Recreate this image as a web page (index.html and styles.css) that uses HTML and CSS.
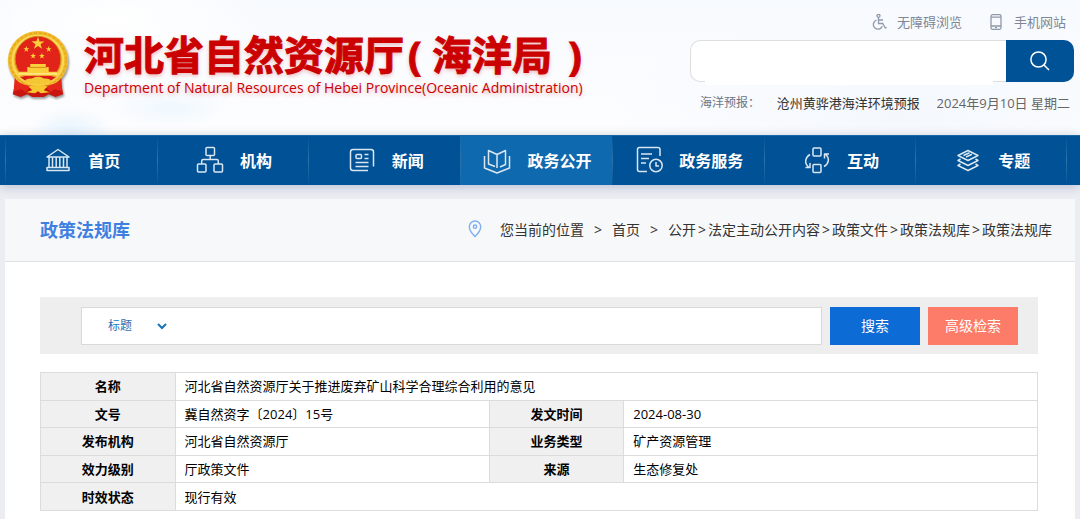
FILE: index.html
```html
<!DOCTYPE html>
<html lang="zh-CN">
<head>
<meta charset="utf-8">
<meta name="viewport" content="width=device-width, initial-scale=1">
<title>河北省自然资源厅(海洋局)</title>
<link rel="stylesheet" href="styles.css">
</head>
<body>
<header class="site-header">
  <div class="brand">
    <svg class="emblem" viewBox="0 0 68 72" aria-hidden="true">
      <path d="M12 48L8 66l8 3 7-3 5 3h12l5-3 7 3 8-3-4-18z" fill="#c8150f"/>
      <ellipse cx="34" cy="31" rx="31" ry="30" fill="#f2bd2c"/>
      <ellipse cx="34" cy="31" rx="29" ry="28" fill="none" stroke="#e5a524" stroke-width="1.5" stroke-dasharray="3 2"/>
      <ellipse cx="34" cy="31" rx="26" ry="25" fill="none" stroke="#fbd95a" stroke-width="2"/>
      <circle cx="34" cy="30" r="23.5" fill="#e2231a" stroke="#d08a18"/>
      <path d="M34 7l1.600 4.700h5l-4 2.900 1.500 4.700-4.100-2.900-4.100 2.900 1.500-4.700-4-2.900h5z" fill="#f9cf3a"/>
      <g fill="#f9cf3a">
        <path id="small-star" d="M22 16.500l.8 2.200h2.200l-1.800 1.400.7 2.200-1.900-1.300-1.900 1.300.7-2.200-1.800-1.400h2.200z"/>
        <use href="#small-star" x="23"/>
        <use href="#small-star" x="7" y="7"/>
        <use href="#small-star" x="16" y="7"/>
        <path d="M26 35h16v3h3v5h9v4H14v-4h9v-5h3z"/>
        <path d="M25 38h18v1H25z" fill="#d8891b"/>
        <path d="M14 44.500h40v1.200H14z" fill="#fff0a0"/>
      </g>
      <path d="M15 48h38l-7 5H22z" fill="#d81b14"/>
      <path d="M34 48c4 0 5 2 8 2s5 1 6 3l-8 3H28l-8-3c1-2 3-3 6-3s4-2 8-2z" fill="#f5c633"/>
      <path d="M10 49c4 6 10 8 17 8l-6 7-4-3-8 2z" fill="#e4261b"/>
      <path d="M58 49c-4 6-10 8-17 8l6 7 4-3 8 2z" fill="#e4261b"/>
      <path d="M24 57l6 1 4-2 4 2 6-1-4 5 6 2-9 1-3-2-3 2-9-1 6-2z" fill="#f7c72f"/>
    </svg>
    <div class="brand-text">
      <h1 class="brand-title">河北省自然资源厅<span class="brand-bureau">( 海洋局 <span class="brand-close">)</span></span></h1>
      <p class="brand-subtitle">Department of Natural Resources of Hebei Province(Oceanic Administration)</p>
    </div>
  </div>
  <div class="header-tools">
    <div class="quick-links">
      <a class="quick-link" href="#">
        <svg class="quick-icon" viewBox="0 0 16 16" aria-hidden="true"><circle cx="7.500" cy="1.800" r="1.500"/><path d="M7.500 3.500v6h4.200l2.600 4.500 1.400-.6M7.500 6h4.500M5.500 6.200a4.600 4.600 0 1 0 5.800 6"/></svg>
        无障碍浏览
      </a>
      <a class="quick-link" href="#">
        <svg class="quick-icon" viewBox="0 0 16 16" aria-hidden="true"><rect x="3" y=".7" width="10" height="14.600" rx="1.500"/><path d="M3 3.200h10M3 12h10M7 13.700h2"/></svg>
        手机网站
      </a>
    </div>
    <form class="site-search">
      <input class="site-search-input" type="text" aria-label="站内搜索">
      <button class="site-search-button" type="button" aria-label="搜索">
        <svg class="search-icon" viewBox="0 0 20 20" aria-hidden="true"><circle cx="8.500" cy="8.500" r="7.600"/><path d="M14 14l5 5"/></svg>
      </button>
      <div class="search-suggest"></div>
    </form>
    <div class="forecast">
      <span class="forecast-label">海洋预报：</span>
      <a class="forecast-link" href="#">沧州黄骅港海洋环境预报</a>
      <span class="forecast-date">2024年9月10日 星期二</span>
    </div>
  </div>
</header>

<nav class="main-nav">
  <a class="nav-item" href="#">
    <svg class="nav-icon" viewBox="0 0 28 28"><path d="M3 11L14 3.500 25 11zM5 11v10M8.500 11v10M12.200 11v10M15.800 11v10M19.500 11v10M23 11v10M3 21.500h22v3H3z"/></svg>首页</a>
  <a class="nav-item" href="#">
    <svg class="nav-icon" viewBox="0 0 28 28"><rect x="10" y="1.500" width="8.500" height="8" rx="1"/><rect x="1.500" y="18" width="8.500" height="8" rx="1"/><rect x="18" y="18" width="8.500" height="8" rx="1"/><path d="M14.200 9.500v4M5.700 18v-3q0-1.500 1.500-1.500h13.600q1.500 0 1.500 1.500v3"/></svg>机构</a>
  <a class="nav-item" href="#">
    <svg class="nav-icon" viewBox="0 0 28 28"><path d="M20 24.500H5q-2.500 0-2.500-2.500V6Q2.500 3.500 5 3.500h18q2.500 0 2.500 2.500v14.500M16.500 8.500h4M16.500 12.500h4M7.500 16.500h13M7.500 20.500h13"/><rect x="8" y="8.500" width="5.500" height="4" rx="1"/></svg>新闻</a>
  <a class="nav-item nav-item-active" href="#">
    <svg class="nav-icon" viewBox="0 0 28 28"><path d="M1.500 10v12l12.500 5 12.500-5V10M12 20.500L5.500 18V4.500L14 8.500V22M17 21l5.500-2.500v-14L14 8.500"/></svg>政务公开</a>
  <a class="nav-item" href="#">
    <svg class="nav-icon" viewBox="0 0 28 28"><path d="M12 25.500H4.500q-2 0-2-2v-20q0-2 2-2H23q2 0 2 2V10M6 8h11M6 12.500h8M6 17h5"/><circle cx="21" cy="19.500" r="6.200"/><path d="M21 16v4h3"/></svg>政务服务</a>
  <a class="nav-item" href="#">
    <svg class="nav-icon" viewBox="0 0 28 28"><rect x="10" y="2" width="8" height="8" rx="1"/><rect x="10" y="18.500" width="8" height="8" rx="1"/><path d="M7 8.500c-5 3-6 9-1 13M2.500 21.500H7V17M21 20.500c5-3 6-8 1.500-12.500M26 8h-4.500v4.500"/></svg>互动</a>
  <a class="nav-item" href="#">
    <svg class="nav-icon" viewBox="0 0 28 28"><path d="M14 4.500l10 5-10 5-10-5zM9.500 9.500l6-2.800M12 11l6-2.800M6.500 13L4 14.500l10 5 10-5-2.500-1.500M6.500 18L4 19.500l10 5 10-5-2.500-1.500"/></svg>专题</a>
</nav>

<main class="panel">
  <div class="panel-head">
    <h2 class="panel-title">政策法规库</h2>
    <div class="breadcrumb">
      <svg class="pin-icon" viewBox="0 0 14 18" aria-hidden="true"><path d="M7 1a5.700 5.700 0 0 1 5.700 5.700C12.700 11 7 16.500 7 16.500S1.300 11 1.300 6.700A5.700 5.700 0 0 1 7 1z"/><circle cx="7" cy="6.700" r="1.700"/></svg>
      <span>您当前的位置</span>
      <span class="crumb-gap">&gt;</span>
      <a href="#">首页</a>
      <span class="crumb-gap">&gt;</span>
      <span class="crumb-path"><a href="#">公开</a><i>&gt;</i><a href="#">法定主动公开内容</a><i>&gt;</i><a href="#">政策文件</a><i>&gt;</i><a href="#">政策法规库</a><i>&gt;</i><a href="#">政策法规库</a></span>
    </div>
  </div>
  <div class="panel-body">
    <form class="filter">
      <div class="filter-box">
        <span class="select-wrap">
          <select class="filter-select" aria-label="检索字段"><option>标题</option></select>
          <svg class="chevron" viewBox="0 0 10 7" aria-hidden="true"><path d="M1 1l4 4 4-4"/></svg>
        </span>
        <input class="filter-input" type="text" aria-label="检索词">
      </div>
      <button class="button button-primary" type="button">搜索</button>
      <button class="button button-accent" type="button">高级检索</button>
    </form>
    <table class="info">
      <colgroup><col class="col-label"><col class="col-value"><col class="col-label"><col></colgroup>
      <tr><th scope="row">名称</th><td colspan="3">河北省自然资源厅关于推进废弃矿山科学合理综合利用的意见</td></tr>
      <tr><th scope="row">文号</th><td>冀自然资字〔2024〕15号</td><th scope="row">发文时间</th><td>2024-08-30</td></tr>
      <tr><th scope="row">发布机构</th><td>河北省自然资源厅</td><th scope="row">业务类型</th><td>矿产资源管理</td></tr>
      <tr><th scope="row">效力级别</th><td>厅政策文件</td><th scope="row">来源</th><td>生态修复处</td></tr>
      <tr><th scope="row">时效状态</th><td colspan="3">现行有效</td></tr>
    </table>
  </div>
</main>
</body>
</html>
```
FILE: styles.css
```css
* {
  box-sizing: border-box;
}

body {
  margin: 0;
  background: #ecedf2;
  color: #222;
  font-family: "Open Sans", "Noto Sans CJK SC", sans-serif;
  font-size: 13px;
}

a {
  color: inherit;
  text-decoration: none;
}

input,
select,
button {
  font-family: inherit;
  border: 0;
  outline: 0;
}

svg {
  flex: none;
  fill: none;
}

/* Header */
.site-header {
  display: flex;
  justify-content: space-between;
  height: 135px;
  padding: 0 6px 0 4px;
  background:
    radial-gradient(ellipse 44px 28px at 70px 135px, #e3f3fd, transparent),
    radial-gradient(ellipse 60px 20px at 170px 108px, #eff8fe, transparent),
    radial-gradient(ellipse 160px 60px at 110px 20px, #fff, transparent),
    radial-gradient(ellipse 300px 90px at 900px 110px, #f4f8fd, transparent),
    linear-gradient(#f7fafe, #fdfdfe);
}

.brand {
  display: flex;
  align-items: flex-start;
  gap: 12px;
  padding-top: 30px;
}

.emblem {
  width: 68px;
  height: 70px;
  filter: drop-shadow(1px 2px 1px rgba(0, 0, 0, 0.4));
}

.brand-text {
  color: #cb0101;
  white-space: nowrap;
  text-shadow: 0 2px 4px rgba(203, 1, 1, 0.3);
}

.brand-title {
  margin: 0;
  padding-top: 2px;
  font-size: 40px;
  line-height: 46px;
  font-weight: 700;
  -webkit-text-stroke: 1px #cb0101;
}

.brand-bureau {
  margin-left: 4px;
}

.brand-close {
  margin-left: 6px;
}

.brand-subtitle {
  margin: 0;
  font-size: 14px;
  line-height: 20px;
}

.header-tools {
  width: 384px;
  padding-top: 14px;
}

.quick-links {
  display: flex;
  justify-content: flex-end;
  gap: 26px;
  padding-right: 8px;
  color: #7d8796;
  font-size: 13px;
  line-height: 16px;
}

.quick-link {
  display: flex;
  gap: 10px;
}

.quick-icon {
  width: 16px;
  height: 16px;
  stroke: #8f99a8;
  stroke-width: 1.3;
}

.site-search {
  display: flex;
  position: relative;
  height: 42px;
  margin-top: 10px;
}

.site-search-input {
  flex: 1;
  min-width: 0;
  padding: 0 12px;
  background: #fff;
  border: 1px solid #dedede;
  border-right: 0;
  border-radius: 10px 0 0 10px;
}

.site-search-button {
  display: grid;
  place-items: center;
  width: 68px;
  background: #005297;
  border-radius: 0 10px 10px 0;
}

.search-icon {
  width: 20px;
  height: 20px;
  stroke: #fff;
  stroke-width: 1.5;
}

.search-suggest {
  position: absolute;
  left: 15px;
  right: 81px;
  top: 38px;
  height: 7px;
  background: #fff;
}

.forecast {
  display: flex;
  align-items: center;
  justify-content: space-between;
  height: 20px;
  margin-top: 10px;
  padding: 0 4px 0 10px;
  color: #333;
}

.forecast-label {
  color: #6d7480;
  font-size: 12px;
}

.forecast-date {
  color: #666;
}

/* Main navigation */
.main-nav {
  display: grid;
  grid-template-columns: repeat(7, 1fr);
  height: 50px;
  padding: 0 13px 0 5px;
  background: #005195;
  border-top: 1px solid #1a67a6;
  box-shadow: 0 2px 10px #b9c0d6;
}

.nav-item {
  display: flex;
  align-items: center;
  justify-content: center;
  gap: 16px;
  padding: 0 0 2px 2px;
  border-left: 1px solid;
  border-image: linear-gradient(transparent, #2d74ad, transparent) 1;
  color: #fff;
  font-size: 16px;
  font-weight: 700;
}

.nav-item:last-child {
  border-right: 1px solid;
}

.nav-item-active {
  background: #0f69ae;
}

.nav-icon {
  width: 28px;
  height: 28px;
  stroke: #d9e7f2;
  stroke-width: 1.5;
  stroke-linejoin: round;
}

/* Content panel */
.panel {
  position: relative;
  margin: 14px 5px 0;
  background: #fff;
}

.panel-head {
  display: flex;
  align-items: center;
  justify-content: space-between;
  height: 63px;
  padding: 0 23px 2px 35px;
  background: #f7f8fa;
  border-bottom: 1px solid #e0e0e0;
}

.panel-title {
  margin: 0;
  color: #3e80df;
  font-size: 18px;
}

.breadcrumb {
  display: flex;
  align-items: center;
  color: #333;
  font-size: 14px;
  white-space: nowrap;
}

.pin-icon {
  width: 14px;
  height: 18px;
  margin-right: 18px;
  stroke: #7daef0;
  stroke-width: 1.4;
}

.crumb-gap {
  margin: 0 10px;
}

.crumb-path i {
  margin: 0 2px;
  font-style: normal;
}

.panel-body {
  padding: 35px 37px 12px 35px;
}

.filter {
  display: flex;
  align-items: center;
  padding: 10px 20px 9px 41px;
  background: #eee;
}

.filter-box {
  display: flex;
  flex: 1;
  height: 38px;
  margin-right: 8px;
  background: #fff;
  border: 1px solid #d9d9d9;
}

.select-wrap {
  position: relative;
  width: 96px;
}

.filter-select {
  width: 100%;
  height: 100%;
  padding: 0 0 2px 26px;
  appearance: none;
  background: transparent;
  color: #2a6fb5;
  font-size: 12px;
}

.chevron {
  position: absolute;
  right: 11px;
  top: 15px;
  width: 10px;
  height: 7px;
  stroke: #1673bd;
  stroke-width: 2;
  pointer-events: none;
}

.filter-input {
  flex: 1;
  min-width: 0;
  background: transparent;
}

.button {
  width: 90px;
  height: 38px;
  padding: 0 0 2px;
  color: #fff;
  font-size: 14px;
}

.button-primary {
  margin-right: 8px;
  background: #0d6bd6;
}

.button-accent {
  background: #fd7b69;
}

.info {
  width: 100%;
  height: 139px;
  margin-top: 18px;
  table-layout: fixed;
  border-collapse: collapse;
  border: 1px solid #dcdcdc;
  color: #000;
  line-height: 18px;
}

.col-label {
  width: 13.5%;
}

.col-value {
  width: 31.5%;
}

.info th,
.info td {
  padding: 0 9px;
  border: 1px solid #dcdcdc;
}

.info th {
  background: #f0f0f0;
  text-align: center;
}
```
